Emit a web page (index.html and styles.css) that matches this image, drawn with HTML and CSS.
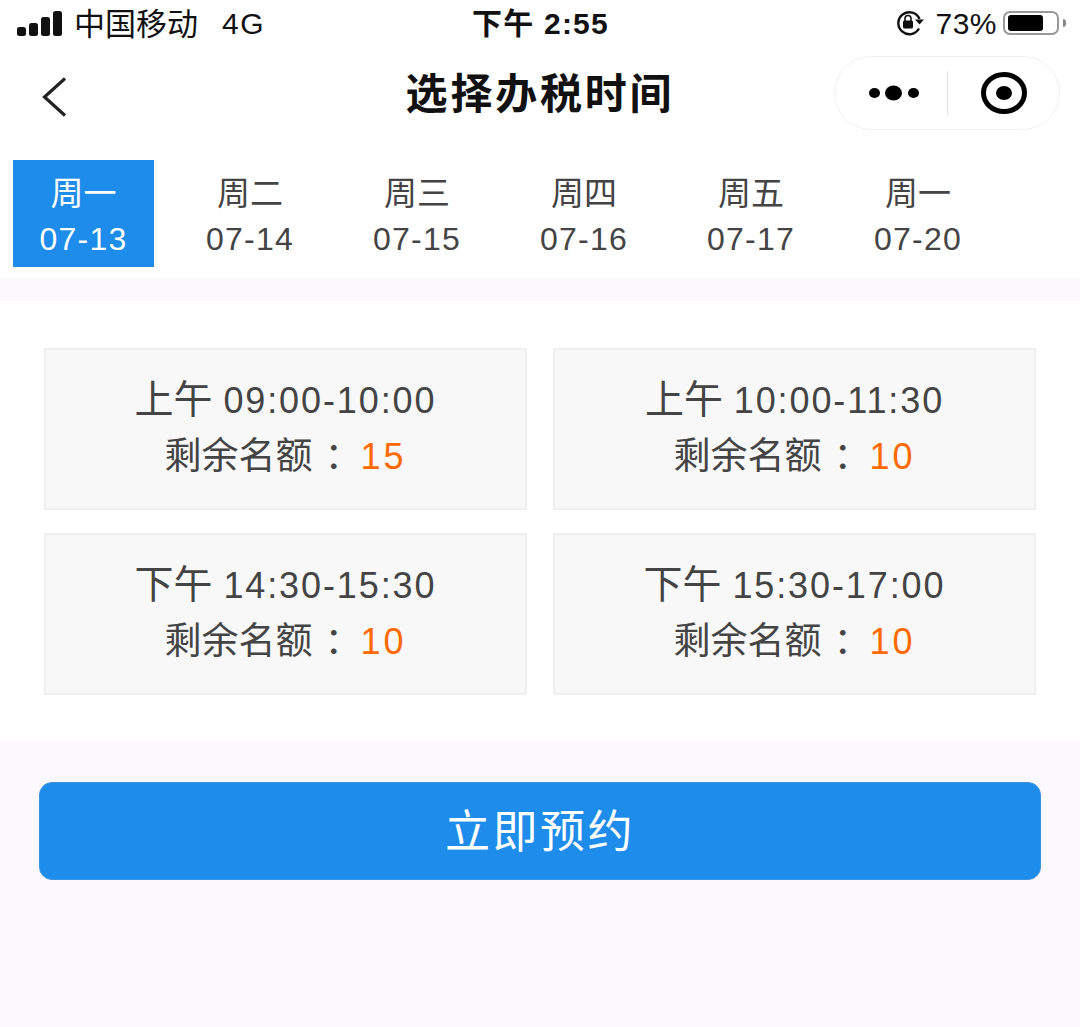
FILE: index.html
```html
<!DOCTYPE html>
<html lang="zh-CN">
<head>
    <meta charset="UTF-8">
    <meta name="viewport" content="width=device-width, initial-scale=1.0">
    <title>选择办税时间</title>
    <link rel="stylesheet" href="styles.css">
</head>
<body>
    <div class="status-bar">
        <div class="status-left">
            <svg class="signal" width="46" height="25" viewBox="0 0 46 25">
                <rect x="0" y="16" width="9" height="9" rx="2.5"/>
                <rect x="12" y="12" width="9" height="13" rx="2.5"/>
                <rect x="24" y="6" width="9" height="19" rx="2.5"/>
                <rect x="36" y="0" width="9" height="25" rx="2.5"/>
            </svg>
            <span class="carrier">中国移动</span>
            <span class="network">4G</span>
        </div>
        <div class="status-time">下午 2:55</div>
        <div class="status-right">
            <svg class="lock" width="30" height="26" viewBox="0 0 30 26">
                <path d="M24 18.5A11 11 0 1 1 24.5 9" fill="none" stroke="#111" stroke-width="2.4"/>
                <path d="M20 9.5h9l-4.5 5z" fill="#111"/>
                <rect x="8" y="10.5" width="10" height="8" rx="1.5" fill="#111"/>
                <path d="M10 11V8.5a3 3 0 0 1 6 0V11" fill="none" stroke="#111" stroke-width="1.6"/>
            </svg>
            <span class="battery-text">73%</span>
            <div class="battery"><div class="battery-level"></div></div>
            <div class="battery-tip"></div>
        </div>
    </div>

    <div class="nav-bar">
        <svg class="back" width="24" height="40" viewBox="0 0 24 40">
            <path d="M23 1.500L2.500 20 23 38.500" fill="none" stroke="#222" stroke-width="3.200"/>
        </svg>
        <h1 class="nav-title">选择办税时间</h1>
        <div class="capsule">
            <svg class="more" width="52" height="16" viewBox="0 0 52 16">
                <ellipse cx="6.500" cy="8" rx="5.500" ry="5"/>
                <ellipse cx="25.500" cy="8" rx="8.500" ry="7.500"/>
                <ellipse cx="45.500" cy="8" rx="5.500" ry="5"/>
            </svg>
            <span class="capsule-line"></span>
            <svg class="target" width="46" height="42" viewBox="0 0 46 42">
                <ellipse cx="23" cy="21" rx="20.500" ry="18.500" fill="none" stroke="#000" stroke-width="5"/>
                <ellipse cx="23" cy="21" rx="8" ry="7"/>
            </svg>
        </div>
    </div>

    <div class="date-tabs">
        <div class="date-tab active"><span class="day">周一</span><span class="date">07-13</span></div>
        <div class="date-tab"><span class="day">周二</span><span class="date">07-14</span></div>
        <div class="date-tab"><span class="day">周三</span><span class="date">07-15</span></div>
        <div class="date-tab"><span class="day">周四</span><span class="date">07-16</span></div>
        <div class="date-tab"><span class="day">周五</span><span class="date">07-17</span></div>
        <div class="date-tab"><span class="day">周一</span><span class="date">07-20</span></div>
    </div>

    <div class="slots">
        <div class="slot">
            <div class="slot-time">上午 <span class="num">09:00-10:00</span></div>
            <div class="slot-left">剩余名额<span class="colon">：</span><span class="count">15</span></div>
        </div>
        <div class="slot">
            <div class="slot-time">上午 <span class="num">10:00-11:30</span></div>
            <div class="slot-left">剩余名额<span class="colon">：</span><span class="count">10</span></div>
        </div>
        <div class="slot">
            <div class="slot-time">下午 <span class="num">14:30-15:30</span></div>
            <div class="slot-left">剩余名额<span class="colon">：</span><span class="count">10</span></div>
        </div>
        <div class="slot">
            <div class="slot-time">下午 <span class="num">15:30-17:00</span></div>
            <div class="slot-left">剩余名额<span class="colon">：</span><span class="count">10</span></div>
        </div>
    </div>

    <button class="book-btn">立即预约</button>
</body>
</html>
```

FILE: styles.css
```css
* {
    box-sizing: border-box;
}
html, body {
    margin: 0;
    padding: 0;
}
body {
    width: 1080px;
    height: 1027px;
    overflow: hidden;
    background-color: #fbf9fe;
    font-family: "Liberation Sans", "Noto Sans CJK SC", sans-serif;
    color: #444;
}
.status-bar {
    height: 48px;
    padding: 0 14px 2px 17px;
    background: #fff;
    display: flex;
    align-items: center;
    justify-content: space-between;
    color: #111;
    font-size: 29px;
}
.status-left, .status-right {
    width: 260px;
    display: flex;
    align-items: center;
}
.status-right {
    justify-content: flex-end;
}
.signal {
    fill: #111;
    margin-right: 11px;
}
.carrier {
    font-size: 31px;
    margin-bottom: 4px;
}
.network {
    margin: 2px 0 0 24px;
    font-size: 30px;
    letter-spacing: 1.5px;
}
.status-time {
    margin: 0 2px 4px 0;
    font-size: 30px;
    font-weight: bold;
    letter-spacing: 1.2px;
}
.lock {
    margin-right: 10px;
}
.battery-text {
    margin: 2px 6px 0 0;
    font-size: 30px;
    letter-spacing: 0.5px;
}
.battery {
    width: 56px;
    height: 24px;
    padding: 2px 3px;
    border: 2px solid #999;
    border-radius: 7px;
}
.battery-level {
    width: 35px;
    height: 100%;
    background: #000;
    border-radius: 3px;
}
.battery-tip {
    width: 3px;
    height: 8px;
    margin-left: 4px;
    background: #888;
    border-radius: 0 3px 3px 0;
}
.nav-bar {
    height: 92px;
    padding: 0 20px 0 42px;
    background: #fff;
    display: flex;
    align-items: center;
    justify-content: space-between;
    position: relative;
}
.back {
    margin-top: 6px;
}
.nav-title {
    position: absolute;
    left: 0;
    right: 0;
    top: 22px;
    margin: 0;
    text-align: center;
    font-size: 42px;
    line-height: 50px;
    font-weight: bold;
    letter-spacing: 2.8px;
    color: #111;
}
.capsule {
    width: 226px;
    height: 74px;
    margin-top: -3px;
    padding-left: 33px;
    border: 1px solid #f0f0f0;
    border-radius: 37px;
    display: flex;
    align-items: center;
    background: #fff;
}
.capsule-line {
    width: 1px;
    height: 44px;
    margin-left: 27px;
    background: #e2e2e2;
}
.target {
    margin-left: 33px;
}
.date-tabs {
    height: 138px;
    padding: 20px 0 0 0;
    background: #fff;
    display: flex;
}
.date-tab {
    width: 167px;
    height: 107px;
    display: flex;
    flex-direction: column;
    align-items: center;
    font-size: 32px;
}
.date-tab:first-child {
    width: 141px;
    margin: 0 13px;
}
.date-tab:nth-child(2) {
    margin-left: -0.5px;
}
.date-tab.active {
    background: #1e8cea;
    color: #fff;
}
.day {
    margin-top: 15px;
    line-height: 38px;
    font-size: 33px;
}
.date {
    margin-top: 8px;
    line-height: 36px;
    letter-spacing: 1.2px;
}
.slots {
    margin-top: 23px;
    height: 440px;
    padding: 47px 44px 0;
    background: #fff;
    display: grid;
    grid-template-columns: 483px 483px;
    grid-template-rows: 162px 162px;
    column-gap: 26px;
    row-gap: 23px;
}
.slot {
    background: #f8f8f8;
    border: 2px solid #efefef;
    text-align: center;
    padding-top: 28px;
}
.slot-time {
    line-height: 44px;
    font-size: 39px;
}
.slot-left {
    margin-top: 12px;
    line-height: 44px;
    font-size: 37px;
}
.num, .count {
    font-size: 36px;
}
.num {
    letter-spacing: 1.9px;
}
.count {
    letter-spacing: 3px;
    margin-left: 11px;
    color: #ff6a00;
}
.colon {
    margin: 0 -12px 0 12px;
}
.book-btn {
    display: block;
    width: 1002px;
    height: 98px;
    margin: 41px 0 0 39px;
    padding: 0 0 6px;
    border: 1px solid #3f93dc;
    border-radius: 13px;
    background: #1e8cea;
    color: #fff;
    font-family: inherit;
    font-size: 45px;
    letter-spacing: 2.500px;
}
```
